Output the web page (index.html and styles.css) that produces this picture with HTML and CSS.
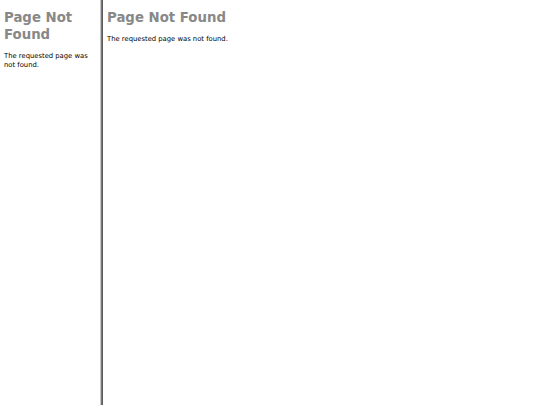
FILE: index.html
```html
<!DOCTYPE html>
<html>
<head>
<meta charset="utf-8">
<link rel="stylesheet" href="styles.css">
</head>
<body>
<div class="layout">
  <aside class="side">
    <h1 class="title">Page Not Found</h1>
    <p class="msg">The requested page was not found.</p>
  </aside>
  <div class="divider"></div>
  <main class="main">
    <h1 class="title">Page Not Found</h1>
    <p class="msg">The requested page was not found.</p>
  </main>
</div>
</body>
</html>
```
FILE: styles.css
```css
html, body { margin: 0; padding: 0; height: 100%; background: #fff; }
body { font-family: "DejaVu Sans", Verdana, sans-serif; color: #000; }
.layout { display: flex; height: 405px; }
.side {
  width: 100px;
  box-sizing: border-box;
  padding: 9px 6px 0 4px;
}
.divider {
  width: 1px;
  border-left: 1px solid #c4c4c4;
  border-right: 1px solid #5a5a5a;
  background: #7a7a7a;
}
.main { flex: 1; padding: 9px 0 0 4px; }
.title {
  margin: 0;
  font-size: 13.3px;
  line-height: 17px;
  font-weight: bold;
  color: #888;
}
.msg {
  margin: 9px 0 0;
  font-size: 6.8px;
  line-height: 8.5px;
}
```
